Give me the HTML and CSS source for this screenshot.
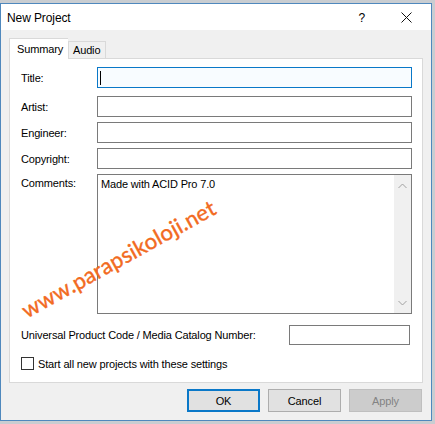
FILE: index.html
```html
<!DOCTYPE html>
<html>
<head>
<meta charset="utf-8">
<link rel="stylesheet" href="styles.css">
</head>
<body>
<div class="window">
  <div class="titlebar">
    <span class="title">New Project</span>
    <span class="help">?</span>
    <span class="close"><svg width="11" height="11" viewBox="0 0 11 11"><path d="M0.5 0.5 L10.5 10.5 M10.5 0.5 L0.5 10.5" stroke="#111" stroke-width="1" fill="none"/></svg></span>
  </div>
  <div class="client">
    <div class="tabs">
      <div class="tab active">Summary</div>
      <div class="tab">Audio</div>
    </div>
    <div class="panel">
      <div class="form">
        <label class="lbl first">Title:</label>
        <div class="field focus first"><span class="caret"></span></div>
        <label class="lbl">Artist:</label>
        <div class="field"></div>
        <label class="lbl">Engineer:</label>
        <div class="field"></div>
        <label class="lbl">Copyright:</label>
        <div class="field"></div>
        <label class="lbl top">Comments:</label>
        <div class="field area">
          <div class="area-text">Made with ACID Pro 7.0</div>
          <div class="vscroll">
            <svg width="9" height="6" viewBox="0 0 9 6"><path d="M0.5 5 L4.5 1 L8.5 5" stroke="#a0a0a0" stroke-width="1" fill="none"/></svg>
            <svg width="9" height="6" viewBox="0 0 9 6"><path d="M0.5 1 L4.5 5 L8.5 1" stroke="#a0a0a0" stroke-width="1" fill="none"/></svg>
          </div>
        </div>
      </div>
      <div class="upc-row">
        <label class="lbl">Universal Product Code / Media Catalog Number:</label>
        <div class="field upc"></div>
      </div>
      <div class="check-row">
        <span class="checkbox"></span>
        <span class="lbl">Start all new projects with these settings</span>
      </div>
    </div>
    <div class="buttons">
      <div class="btn default">OK</div>
      <div class="btn">Cancel</div>
      <div class="btn disabled">Apply</div>
    </div>
  </div>
</div>
<div class="watermark">www.parapsikoloji.net</div>
</body>
</html>
```
FILE: styles.css
```css
html, body {
  margin: 0;
  padding: 0;
}
body {
  background: #c9cdd1;
  width: 435px;
  height: 424px;
  overflow: hidden;
  position: relative;
  font-family: "Liberation Sans", Arial, sans-serif;
  font-size: 11px;
  letter-spacing: -0.15px;
  color: #000;
}
.window {
  margin-top: 3px;
  width: 432px;
  height: 418px;
  box-sizing: border-box;
  border: 1px solid #4f88bd;
  background: #f0f0f0;
  display: flex;
  flex-direction: column;
}
.titlebar {
  height: 26px;
  background: #fff;
  display: flex;
  align-items: center;
  position: relative;
}
.title {
  font-size: 12px;
  letter-spacing: -0.1px;
  margin-left: 6px;
  margin-top: 1px;
}
.help {
  font-size: 12px;
  margin-left: auto;
  margin-right: 36px;
  margin-top: 2px;
}
.close {
  width: 11px;
  height: 11px;
  margin-right: 19px;
  margin-top: 1px;
  display: flex;
}
.client {
  flex: 1;
  padding: 8px 8px 8px 8px;
  display: flex;
  flex-direction: column;
}
.tabs {
  display: flex;
  align-items: flex-end;
  height: 20px;
  position: relative;
  z-index: 1;
}
.tab {
  box-sizing: border-box;
  height: 17px;
  border: 1px solid #d9d9d9;
  border-bottom: none;
  background: #f0f0f0;
  padding: 0 6px 0 4px;
  display: flex;
  align-items: center;
  width: 38px;
}
.tab.active {
  height: 21px;
  margin-bottom: -1px;
  background: #fff;
  width: 59px;
  padding-left: 7px;
  border-right: none;
}
.panel {
  height: 325px;
  box-sizing: border-box;
  border: 1px solid #d9d9d9;
  background: #fff;
  padding: 8px 10px 0 11px;
}
.form {
  display: grid;
  grid-template-columns: 76px 1fr;
  row-gap: 5px;
}
.form .first {
  margin-bottom: 3px;
}
.lbl {
  display: flex;
  align-items: center;
  color: #000;
}
.lbl.top {
  align-items: flex-start;
  padding-top: 3px;
}
.field {
  height: 21px;
  box-sizing: border-box;
  border: 1px solid #7a7a7a;
  background: #fff;
  position: relative;
}
.field.focus {
  border-color: #0a78c8;
  background: #f8fcff;
}
.caret {
  position: absolute;
  left: 2px;
  top: 3px;
  width: 1px;
  height: 14px;
  background: #000;
}
.field.area {
  height: 140px;
  display: flex;
}
.area-text {
  flex: 1;
  padding: 3px 0 0 3px;
}
.vscroll {
  width: 17px;
  background: #f0f0f0;
  display: flex;
  flex-direction: column;
  justify-content: space-between;
  align-items: center;
  padding: 8px 0 7px;
}
.upc-row {
  display: flex;
  align-items: center;
  justify-content: space-between;
  margin-top: 11px;
  margin-right: 2px;
}
.field.upc {
  width: 121px;
  height: 20px;
}
.check-row {
  display: flex;
  align-items: center;
  margin-top: 12px;
  gap: 4px;
}
.checkbox {
  width: 13px;
  height: 13px;
  box-sizing: border-box;
  border: 1px solid #333;
  background: #fff;
}
.buttons {
  margin-top: 6px;
  display: flex;
  justify-content: flex-end;
  gap: 8px;
  padding-right: 1px;
}
.btn {
  width: 73px;
  height: 23px;
  box-sizing: border-box;
  background: #e1e1e1;
  border: 1px solid #adadad;
  display: flex;
  align-items: center;
  justify-content: center;
}
.btn.default {
  border: 2px solid #0a78c8;
}
.btn.disabled {
  background: #cccccc;
  border-color: #bfbfbf;
  color: #838383;
}
.watermark {
  position: absolute;
  left: 26px;
  top: 300px;
  font-family: Lato, "Open Sans", sans-serif;
  font-size: 22px;
  font-weight: 400;
  line-height: 22px;
  letter-spacing: 0.2px;
  color: #f26a21;
  white-space: nowrap;
  transform-origin: 0 17px;
  transform: rotate(-29deg);
  -webkit-text-stroke: 0.4px #f26a21;
}
```
